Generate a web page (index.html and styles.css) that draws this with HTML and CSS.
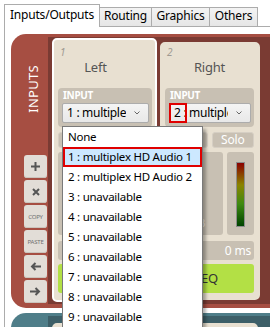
FILE: index.html
```html
<!DOCTYPE html>
<html lang="en">
<head>
    <meta charset="UTF-8">
    <meta name="viewport" content="width=device-width, initial-scale=1.0">
    <title>Inputs/Outputs</title>
    <link rel="stylesheet" href="styles.css">
</head>
<body>
    <div class="tabs">
        <div class="tab active">Inputs/Outputs</div>
        <div class="tab tab-routing">Routing</div>
        <div class="tab tab-graphics">Graphics</div>
        <div class="tab tab-others">Others</div>
        <div class="tab-fill"></div>
    </div>

    <div class="tab-body">
        <div class="section inputs">
            <div class="side">
                <div class="side-title"><span>INPUTS</span></div>
                <div class="side-buttons">
                    <div class="side-btn">
                        <svg width="9" height="9" viewBox="0 0 9 9"><path d="M4.5 0v9M0 4.5h9" stroke="#555" stroke-width="2"/></svg>
                    </div>
                    <div class="side-btn">
                        <svg width="8" height="8" viewBox="0 0 8 8"><path d="M1 1l6 6M7 1l-6 6" stroke="#555" stroke-width="2"/></svg>
                    </div>
                    <div class="side-btn side-word">COPY</div>
                    <div class="side-btn side-word">PASTE</div>
                    <div class="side-btn">
                        <svg width="11" height="9" viewBox="0 0 11 9"><path d="M11 4.5H2M5.5 1L2 4.5 5.5 8" stroke="#555" stroke-width="2" fill="none"/></svg>
                    </div>
                    <div class="side-btn">
                        <svg width="11" height="9" viewBox="0 0 11 9"><path d="M0 4.5h9M5.5 1L9 4.5 5.5 8" stroke="#555" stroke-width="2" fill="none"/></svg>
                    </div>
                </div>
            </div>

            <div class="strip">
                <!-- channel 1 (selected, dropdown open) -->
                <div class="card selected">
                    <div class="card-num">1</div>
                    <div class="card-name name-left">Left</div>
                    <div class="group">
                        <div class="group-label">INPUT</div>
                        <div class="combo">
                            <span class="combo-text">1 : multiplex HD Audio 1</span>
                            <span class="combo-arrow">
                                <svg width="6" height="4" viewBox="0 0 6 4"><path d="M0.5 0.5L3 3 5.5 0.5" stroke="#666" fill="none"/></svg>
                            </span>
                            <ul class="dropdown">
                                <li>None</li>
                                <li class="current">1 : multiplex HD Audio 1</li>
                                <li>2 : multiplex HD Audio 2</li>
                                <li>3 : unavailable</li>
                                <li>4 : unavailable</li>
                                <li>5 : unavailable</li>
                                <li>6 : unavailable</li>
                                <li>7 : unavailable</li>
                                <li>8 : unavailable</li>
                                <li>9 : unavailable</li>
                            </ul>
                        </div>
                    </div>
                    <div class="btn-row">
                        <div class="btn">Mute</div>
                        <div class="btn">Solo</div>
                    </div>
                    <div class="meter-row">
                        <div class="fader"><span>0 dB</span></div>
                        <div class="meter"><div class="meter-bar"></div></div>
                    </div>
                    <div class="delay">0 ms</div>
                    <div class="eq">EQ</div>
                </div>

                <!-- channel 2 -->
                <div class="card">
                    <div class="card-num">2</div>
                    <div class="card-name">Right</div>
                    <div class="group">
                        <div class="group-label">INPUT</div>
                        <div class="combo">
                            <span class="combo-text">2 : multiplex HD Audio 2</span>
                            <span class="combo-arrow">
                                <svg width="6" height="4" viewBox="0 0 6 4"><path d="M0.5 0.5L3 3 5.5 0.5" stroke="#666" fill="none"/></svg>
                            </span>
                            <div class="mark"></div>
                        </div>
                    </div>
                    <div class="btn-row">
                        <div class="btn">Mute</div>
                        <div class="btn">Solo</div>
                    </div>
                    <div class="meter-row">
                        <div class="fader"><span>0 dB</span></div>
                        <div class="meter"><div class="meter-bar"></div></div>
                    </div>
                    <div class="delay">0 ms</div>
                    <div class="eq">EQ</div>
                </div>
            </div>
        </div>

        <div class="section outputs">
            <div class="side"></div>
            <div class="strip">
                <div class="card stub"></div>
                <div class="card stub"></div>
            </div>
        </div>
    </div>
</body>
</html>
```

FILE: styles.css
```css
body {
    margin: 0;
    width: 270px;
    height: 327px;
    overflow: hidden;
    background-color: white;
    font-family: 'Noto Sans', 'Open Sans', sans-serif;
    font-size: 12px;
    letter-spacing: -0.2px;
    color: black;
}

/* tab strip */
.tabs {
    display: flex;
    align-items: flex-end;
    height: 23px;
    margin: 4px 0 0 4px;
    width: 320px;
}
.tab {
    box-sizing: border-box;
    height: 20px;
    line-height: 16px;
    text-align: center;
    border: 1px solid #acacac;
    margin-left: -1px;
    background: linear-gradient(#f3f3f3, #e6e6e6);
}
.tab.active {
    width: 96px;
    height: 23px;
    margin-left: 0;
    padding-top: 2px;
    border-bottom: none;
    background: white;
}
.tab-routing { width: 53px; }
.tab-graphics { width: 59px; }
.tab-others { width: 49px; }
.tab-fill {
    flex: 1;
    border-bottom: 1px solid #acacac;
}

.tab-body {
    margin-left: 4px;
    padding: 7px 0 0 6px;
    border-left: 1px solid #acacac;
}

/* red / teal sections */
.section {
    display: flex;
    width: 300px;
    padding: 3px 0 4px;
    border-radius: 15px 0 0 15px;
}
.inputs {
    background-color: #a64e42;
}
.outputs {
    margin-top: 5px;
    height: 40px;
    background-color: #4f7e89;
}
.side {
    width: 37px;
    box-sizing: border-box;
    padding: 0 1px 0 13px;
    flex-shrink: 0;
}
.side-title {
    height: 104px;
    padding-bottom: 14px;
    display: flex;
    align-items: center;
}
.side-title span {
    writing-mode: vertical-rl;
    transform: rotate(180deg);
    margin-left: 2px;
    color: white;
    font-size: 13px;
    line-height: 14px;
    letter-spacing: 0.3px;
}
.side-buttons {
    display: flex;
    flex-direction: column;
    gap: 2px;
}
.side-btn {
    width: 23px;
    height: 23px;
    display: flex;
    align-items: center;
    justify-content: center;
    background-color: #e2ddd7;
    border-radius: 3px;
    box-shadow: inset 0 -1px 0 #cbc4bc;
}
.side-word {
    font-size: 6px;
    color: #707070;
    letter-spacing: -0.2px;
}

.strip {
    flex: 1;
    display: flex;
    align-items: flex-start;
    gap: 3px;
    padding: 1px 0 2px 4px;
    background-color: #7a3b33;
}
.outputs .strip {
    padding-top: 4px;
    background-color: #3d5f68;
}

/* channel cards */
.card {
    box-sizing: border-box;
    width: 100px;
    margin-top: 4px;
    padding: 3px 4px 5px 3px;
    background-color: #e8e0d1;
    border: 2px solid #e8e0d1;
    border-radius: 5px;
}
.card.selected {
    width: 105px;
    margin-top: 0;
    padding: 7px 3px 7px 4px;
    border-color: white;
}
.card.stub {
    height: 30px;
    margin-top: 3px;
}
.card.stub:first-child {
    width: 103px;
}
.card-num {
    padding-left: 2px;
    font-size: 10px;
    font-style: italic;
    line-height: 11px;
    color: #a09a92;
}
.card-name {
    text-align: center;
    font-size: 13px;
    line-height: 18px;
    color: #555;
}
.name-left {
    padding-right: 19px;
}

.group {
    margin-top: 12px;
    padding: 1px 3px 4px 4px;
    background-color: #c8c0b3;
    border-radius: 4px;
}
.group-label {
    padding-left: 1px;
    font-size: 10px;
    font-weight: bold;
    line-height: 12px;
    letter-spacing: -0.3px;
    color: white;
}
.combo {
    position: relative;
    box-sizing: border-box;
    display: flex;
    height: 20px;
    margin-top: 2px;
    padding-left: 4px;
    background: linear-gradient(#f4f4f4, #e8e8e8);
    border: 1px solid #acacac;
    border-radius: 2px;
}
.combo-text {
    flex: 1;
    overflow: hidden;
    white-space: nowrap;
    line-height: 18px;
    letter-spacing: -0.3px;
}
.combo-arrow {
    width: 22px;
    display: flex;
    align-items: center;
    justify-content: center;
}
.mark {
    position: absolute;
    left: -1px;
    top: -1px;
    width: 18px;
    height: 20px;
    box-sizing: border-box;
    border: 2px solid #e00000;
}

.dropdown {
    position: absolute;
    left: -1px;
    top: 22px;
    z-index: 10;
    width: 141px;
    box-sizing: border-box;
    margin: 0;
    padding: 0;
    list-style: none;
    font-size: 11.5px;
    letter-spacing: -0.25px;
    background-color: white;
    border: 1px solid #7a7a7a;
    box-shadow: 3px 3px 3px rgba(0, 0, 0, 0.3);
}
.dropdown li {
    height: 20px;
    line-height: 20px;
    padding-left: 5px;
    white-space: nowrap;
}
.dropdown li.current {
    box-sizing: border-box;
    line-height: 16px;
    padding-left: 3px;
    background-color: #cce8ff;
    border: 2px solid #e00000;
}

.btn-row {
    display: flex;
    gap: 4px;
    margin-top: 5px;
}
.btn {
    flex: 1;
    box-sizing: border-box;
    height: 16px;
    line-height: 14px;
    text-align: center;
    color: white;
    background-color: #c8c0b3;
    border: 1px solid #d6cfc4;
    border-radius: 3px;
}

.meter-row {
    display: flex;
    gap: 4px;
    height: 83px;
    margin-top: 4px;
}
.fader {
    flex: 1;
    display: flex;
    align-items: flex-end;
    justify-content: center;
    padding-bottom: 5px;
    box-sizing: border-box;
    background-color: #c8c0b3;
    border-radius: 3px;
    color: #eee8df;
    font-size: 11px;
}
.meter {
    width: 27px;
    display: flex;
    justify-content: center;
    padding-top: 10px;
    box-sizing: border-box;
    background-color: #c8c0b3;
    border-radius: 3px;
}
.meter-bar {
    width: 9px;
    height: 65px;
    box-sizing: border-box;
    border: 1px solid #8c8c8c;
    background: linear-gradient(#8b0000, #8a8400 35%, #3e8a12 65%, #004400);
}

.delay {
    height: 19px;
    margin-top: 6px;
    padding-right: 3px;
    line-height: 19px;
    text-align: right;
    color: white;
    background-color: #c8c0b3;
    border-radius: 3px;
}
.eq {
    height: 29px;
    margin-top: 4px;
    line-height: 29px;
    text-align: center;
    font-size: 13px;
    color: #333;
    background-color: #b3e045;
    border-radius: 3px;
}
```
